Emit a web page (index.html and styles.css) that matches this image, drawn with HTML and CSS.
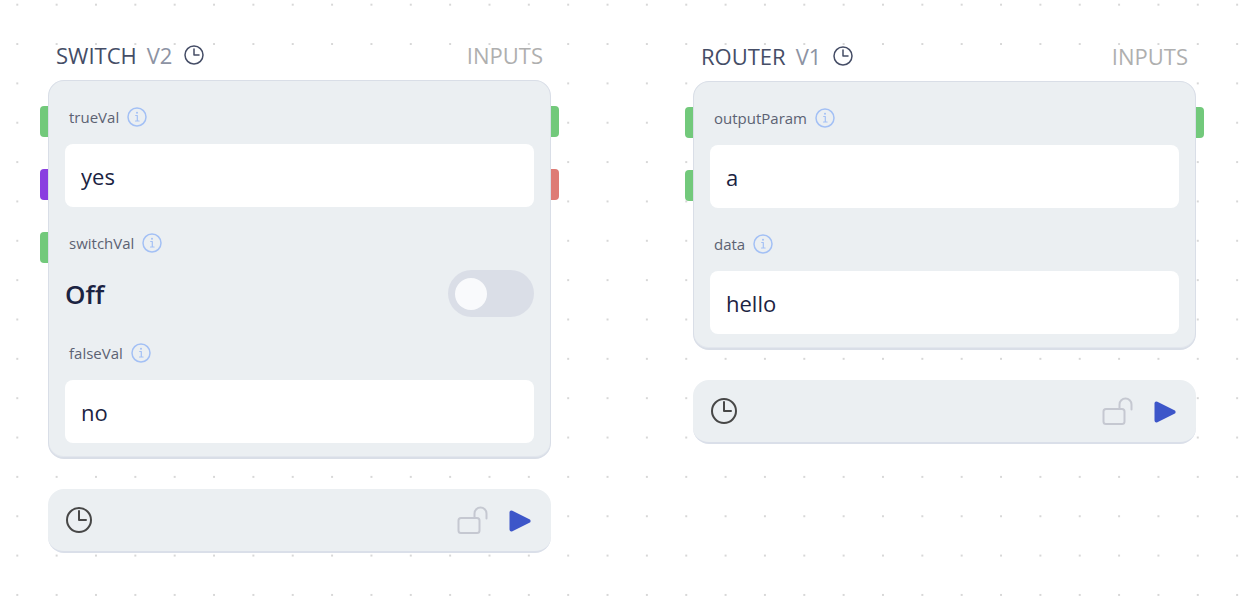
FILE: index.html
```html
<!DOCTYPE html>
<html lang="en">
<head>
<meta charset="utf-8">
<meta name="viewport" content="width=device-width, initial-scale=1">
<title>Flow editor</title>
<link rel="stylesheet" href="styles.css">
</head>
<body>
<svg class="symbols" aria-hidden="true">
  <symbol id="clock" viewBox="0 0 20 20"><circle cx="10" cy="10" r="9"/><path d="M10 4v6h5"/></symbol>
  <symbol id="clock-large" viewBox="0 0 28 28"><circle cx="14" cy="14" r="12"/><path d="M14 5v9h7"/></symbol>
  <symbol id="info" viewBox="0 0 20 20"><circle cx="10" cy="10" r="9"/><path class="info-stem" d="M8.700 8.500H10.300V14M8.500 14h3.600"/><circle class="info-dot" cx="10" cy="5.800" r="1"/></symbol>
  <symbol id="unlock" viewBox="0 0 32 30"><rect x="1.500" y="13" width="21" height="15" rx="2.500"/><path d="M17.500 13V8.500a6 6 0 0 1 12 0V13.500"/></symbol>
  <symbol id="play" viewBox="0 0 22 24"><path d="M2.500 4.500v17l17-8.500z"/></symbol>
</svg>
<main class="canvas">
  <svg class="grid" aria-hidden="true">
    <defs><pattern id="dots" x="16.300" y="3.700" width="39.350" height="39.350" patternUnits="userSpaceOnUse"><circle cx="1" cy="1" r="1"/></pattern></defs>
    <rect width="100%" height="100%" fill="url(#dots)"/>
  </svg>

  <section class="node node-switch">
    <header class="node-header">
      <h2 class="node-title">SWITCH <span class="version">V2</span></h2>
      <button class="icon-button" aria-label="Switch history"><svg class="icon-small"><use href="#clock"/></svg></button>
      <button class="inputs-button">INPUTS</button>
    </header>
    <div class="card">
      <div class="ports ports-left"><span class="port green"></span><span class="port purple"></span><span class="port green"></span></div>
      <div class="ports ports-right"><span class="port green"></span><span class="port red"></span></div>
      <div class="field">
        <div class="field-label"><label for="true-val">trueVal</label><button class="icon-button info" aria-label="About trueVal"><svg class="icon-small"><use href="#info"/></svg></button></div>
        <input class="text-input" id="true-val" type="text" value="yes">
      </div>
      <div class="field">
        <div class="field-label"><label for="switch-val">switchVal</label><button class="icon-button info" aria-label="About switchVal"><svg class="icon-small"><use href="#info"/></svg></button></div>
        <div class="toggle-row"><span class="toggle-state">Off</span><input class="toggle" id="switch-val" type="checkbox" role="switch"></div>
      </div>
      <div class="field">
        <div class="field-label"><label for="false-val">falseVal</label><button class="icon-button info" aria-label="About falseVal"><svg class="icon-small"><use href="#info"/></svg></button></div>
        <input class="text-input" id="false-val" type="text" value="no">
      </div>
    </div>
    <footer class="node-footer">
      <button class="icon-button history" aria-label="Run history"><svg class="icon-clock"><use href="#clock-large"/></svg></button>
      <button class="icon-button lock" aria-label="Lock"><svg class="icon-lock"><use href="#unlock"/></svg></button>
      <button class="icon-button play" aria-label="Run"><svg class="icon-play"><use href="#play"/></svg></button>
    </footer>
  </section>

  <section class="node node-router">
    <header class="node-header">
      <h2 class="node-title">ROUTER <span class="version">V1</span></h2>
      <button class="icon-button" aria-label="Router history"><svg class="icon-small"><use href="#clock"/></svg></button>
      <button class="inputs-button">INPUTS</button>
    </header>
    <div class="card">
      <div class="ports ports-left"><span class="port green"></span><span class="port green"></span></div>
      <div class="ports ports-right"><span class="port green"></span></div>
      <div class="field">
        <div class="field-label"><label for="output-param">outputParam</label><button class="icon-button info" aria-label="About outputParam"><svg class="icon-small"><use href="#info"/></svg></button></div>
        <input class="text-input" id="output-param" type="text" value="a">
      </div>
      <div class="field">
        <div class="field-label"><label for="data">data</label><button class="icon-button info" aria-label="About data"><svg class="icon-small"><use href="#info"/></svg></button></div>
        <input class="text-input" id="data" type="text" value="hello">
      </div>
    </div>
    <footer class="node-footer">
      <button class="icon-button history" aria-label="Run history"><svg class="icon-clock"><use href="#clock-large"/></svg></button>
      <button class="icon-button lock" aria-label="Lock"><svg class="icon-lock"><use href="#unlock"/></svg></button>
      <button class="icon-button play" aria-label="Run"><svg class="icon-play"><use href="#play"/></svg></button>
    </footer>
  </section>
</main>
</body>
</html>
```
FILE: styles.css
```css
* { box-sizing: border-box; }

body {
  margin: 0;
  background: #fff;
  color: #1b2342;
  font-family: "Open Sans", "Noto Sans", sans-serif;
}

button, input { font: inherit; color: inherit; margin: 0; }

.symbols { position: absolute; width: 0; height: 0; }

.canvas { position: relative; min-height: 100vh; overflow: hidden; }

.grid { position: absolute; inset: 0; width: 100%; height: 100%; fill: #cacaca; }

.node { position: absolute; width: 503px; }
.node-switch { left: 48px; top: 30px; }
.node-router { left: 693px; top: 31px; }

.node-header {
  display: flex;
  align-items: center;
  gap: 12px;
  height: 50px;
  padding: 0 8px;
}

.node-title {
  display: flex;
  gap: 10px;
  margin: 0;
  color: #454d66;
  font-size: 22px;
  font-weight: 400;
  line-height: 32px;
}

.version { color: #8d93a3; }

.icon-button {
  display: flex;
  padding: 0;
  border: 0;
  background: none;
  color: #454d66;
  cursor: pointer;
}

.icon-button svg { fill: none; stroke: currentColor; stroke-linecap: round; stroke-linejoin: round; }

.icon-small { width: 20px; height: 20px; stroke-width: 1.5; }
.icon-clock { width: 28px; height: 28px; stroke-width: 2; }
.icon-lock { width: 32px; height: 30px; stroke-width: 2; }
.icon-button .icon-play { width: 22px; height: 24px; fill: currentColor; stroke-width: 4; }

.inputs-button {
  margin-left: auto;
  padding: 0;
  border: 0;
  background: none;
  color: #afafaf;
  font-size: 22px;
  line-height: 32px;
}

.card {
  position: relative;
  display: flex;
  flex-direction: column;
  gap: 16px;
  padding: 16px 16px 14px;
  border: 1px solid #d9dee7;
  border-bottom-width: 2px;
  border-radius: 16px;
  background: #ebeff2;
  box-shadow: inset 0 -1px #e2e6ed;
}

.ports { position: absolute; top: 25px; display: flex; flex-direction: column; gap: 32px; }
.ports-left { right: 100%; margin-right: 1px; }
.ports-right { left: 100%; margin-left: 1px; }
.port { width: 8px; height: 31px; }
.ports-left .port { border-radius: 4px 0 0 4px; }
.ports-right .port { border-radius: 0 4px 4px 0; }
.green { background: #72c97b; }
.purple { background: #8a3ee0; }
.red { background: #de7b75; }

.field { display: flex; flex-direction: column; gap: 7px; }

.field-label {
  display: flex;
  align-items: center;
  gap: 8px;
  height: 40px;
  padding-left: 4px;
  color: #5c6273;
  font-size: 15px;
}

.info { color: #a3c0f5; }
.info-stem { stroke-width: 1.2; }
.info-dot { fill: currentColor; stroke: none; }

.text-input {
  width: 100%;
  height: 63px;
  padding: 0 16px;
  border: 0;
  border-radius: 8px;
  background: #fff;
  font-size: 22px;
}

.toggle-row { display: flex; align-items: center; justify-content: space-between; height: 47px; }
.toggle-state { font-size: 26px; font-weight: 600; }

.toggle {
  display: flex;
  align-items: center;
  width: 86px;
  height: 47px;
  padding: 0 7px;
  border-radius: 24px;
  background: #dadee7;
  appearance: none;
}

.toggle::before { content: ""; width: 32px; height: 32px; border-radius: 50%; background: #f9fafc; }
.toggle:checked { justify-content: flex-end; background: #3d56c9; }

.node-footer {
  display: flex;
  align-items: center;
  height: 64px;
  margin-top: 30px;
  padding: 0 20px 0 17px;
  border-bottom: 2px solid #dadfe9;
  border-radius: 16px;
  background: #ebeff2;
}

.history { color: #474747; }
.lock { margin-left: auto; color: #c5c8d1; }
.play { margin-left: 20px; color: #3d56c9; }
```
